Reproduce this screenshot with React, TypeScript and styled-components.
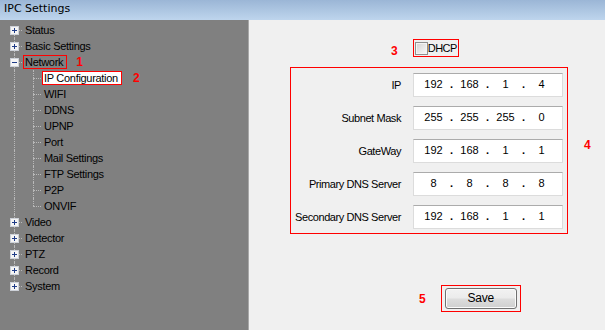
import React from "react";
import styled, { createGlobalStyle } from "styled-components";

const GlobalStyle = createGlobalStyle`
  html, body { margin: 0; padding: 0; background: #f0f0f0; }
  body {
    font-family: "Liberation Sans", Arial, sans-serif;
    font-size: 11px;
    color: #000;
    overflow: hidden;
  }
  * { box-sizing: border-box; }
`;

const Window = styled.div`
  width: 605px;
  height: 330px;
  display: flex;
  flex-direction: column;
  background: #f0f0f0;
  overflow: hidden;
`;

const TitleBar = styled.header`
  height: 20px;
  flex: none;
  padding-left: 4px;
  line-height: 18px;
  font-family: "DejaVu Sans", "Liberation Sans", sans-serif;
  font-size: 11px;
  color: #000;
  background: linear-gradient(#9bb6d6, #bed5ed);
`;

const Body = styled.div`
  flex: 1;
  display: flex;
  min-height: 0;
`;

const Sidebar = styled.nav`
  width: 249px;
  flex: none;
  background: #808080;
  border-right: 1px solid #a8a8a8;
  padding-top: 2px;
`;

const Tree = styled.ul`
  list-style: none;
  margin: 0;
  padding: 0;
`;

const Row = styled.li`
  display: flex;
  align-items: center;
  height: 16px;
  line-height: 16px;
  white-space: nowrap;
  letter-spacing: -0.3px;
`;

const Gutter = styled.span<{
  $width: number;
  $line: number;
  $first?: boolean;
  $last?: boolean;
  $branch?: boolean;
}>`
  position: relative;
  align-self: stretch;
  flex: none;
  width: ${(p) => p.$width}px;
  &::before {
    content: "";
    position: absolute;
    left: ${(p) => p.$line}px;
    top: ${(p) => (p.$first ? "50%" : "0")};
    bottom: ${(p) => (p.$last ? "50%" : "0")};
    border-left: 1px dotted #b9b9b9;
  }
  &::after {
    content: "";
    display: ${(p) => (p.$branch ? "block" : "none")};
    position: absolute;
    left: ${(p) => p.$line}px;
    right: 0;
    top: 50%;
    border-top: 1px dotted #b9b9b9;
  }
`;

const ExpanderIcon = styled.svg`
  position: absolute;
  left: 10px;
  top: 4px;
  z-index: 1;
`;

const Label = styled.span<{ $boxed?: boolean; $selected?: boolean }>`
  margin-left: 1px;
  padding: 0 3px 0 1px;
  line-height: 12px;
  border: 1px solid ${(p) => (p.$boxed ? "#ff0000" : "transparent")};
  background: ${(p) => (p.$selected ? "#ffffff" : "transparent")};
`;

const Marker = styled.span<{ $gap?: number }>`
  color: #ff0000;
  font-weight: bold;
  font-size: 12px;
  line-height: 14px;
  letter-spacing: 0;
  margin-left: ${(p) => p.$gap ?? 0}px;
  flex: none;
`;

const Content = styled.main`
  flex: 1;
  display: flex;
  flex-direction: column;
  padding-top: 19px;
`;

const DhcpRow = styled.div`
  display: flex;
  align-items: flex-end;
  padding-left: 142px;
`;

const LowMarker = styled(Marker)`
  margin-bottom: -1px;
`;

const Outline = styled.div<{ $gap?: number }>`
  border: 1px solid #ff0000;
  margin-left: ${(p) => p.$gap ?? 0}px;
`;

const DhcpBox = styled(Outline)`
  display: flex;
  align-items: center;
  height: 18px;
  padding: 0 1px;
`;

const CheckBox = styled.span`
  flex: none;
  width: 13px;
  height: 13px;
  border: 1px solid #8e8f8f;
  background: linear-gradient(135deg, #d2d2d2, #fafafa);
  box-shadow: inset 0 0 0 1px #f4f4f4;
`;

const CheckText = styled.span`
  letter-spacing: -0.5px;
  line-height: 14px;
`;

const FieldsRow = styled.div`
  display: flex;
  align-items: flex-start;
  margin-top: 10px;
  padding-left: 41px;
`;

const FieldsBox = styled.div`
  width: 278px;
  border: 1px solid #ff0000;
  padding: 5px 4px 4px 0;
  display: flex;
  flex-direction: column;
  gap: 9px;
`;

const FieldRow = styled.div`
  display: flex;
  align-items: center;
  height: 24px;
`;

const FieldLabel = styled.span`
  width: 110px;
  margin-right: 12px;
  text-align: right;
  white-space: nowrap;
  letter-spacing: -0.42px;
`;

const IpInput = styled.div`
  width: 150px;
  height: 24px;
  display: flex;
  align-items: center;
  padding: 0 0 2px 5px;
  background: #ffffff;
  border: 1px solid #dcdcdc;
  border-top-color: #ababab;
`;

const Octet = styled.span`
  width: 29px;
  text-align: center;
`;

const Dot = styled.span`
  width: 7px;
  text-align: center;
  font-weight: bold;
`;

const SideMarker = styled(Marker)`
  margin-top: 71px;
`;

const SaveRow = styled.div`
  display: flex;
  align-items: center;
  margin-top: 51px;
  padding-left: 170px;
`;

const SaveBox = styled(Outline)`
  padding: 2px 3px;
`;

const Button = styled.button`
  display: block;
  width: 72px;
  height: 21px;
  padding: 0 0 1px;
  border: 1px solid #707070;
  border-radius: 3px;
  background: linear-gradient(#f2f2f2 0%, #ebebeb 48%, #dddddd 52%, #cfcfcf 100%);
  box-shadow: inset 0 0 0 1px #fbfbfb;
  font-family: "Liberation Sans", Arial, sans-serif;
  font-size: 12px;
  letter-spacing: -0.3px;
  color: #000;
`;

const Expander = ({ open }: { open?: boolean }) => (
  <ExpanderIcon width="9" height="9" viewBox="0 0 9 9">
    <rect x="0.5" y="0.5" width="8" height="8" fill="#f5f5f5" stroke="#cdd1d8" />
    <path d="M2 4.5h5" stroke="#1f3c88" />
    {!open && <path d="M4.5 2v5" stroke="#1f3c88" />}
  </ExpanderIcon>
);

type Item = {
  label: string;
  marker?: string;
  gap?: number;
  boxed?: boolean;
  selected?: boolean;
  children?: Item[];
};

const tree: Item[] = [
  { label: "Status" },
  { label: "Basic Settings" },
  {
    label: "Network",
    boxed: true,
    marker: "1",
    gap: 9,
    children: [
      { label: "IP Configuration", boxed: true, selected: true, marker: "2", gap: 11 },
      { label: "WIFI" },
      { label: "DDNS" },
      { label: "UPNP" },
      { label: "Port" },
      { label: "Mail Settings" },
      { label: "FTP Settings" },
      { label: "P2P" },
      { label: "ONVIF" },
    ],
  },
  { label: "Video" },
  { label: "Detector" },
  { label: "PTZ" },
  { label: "Record" },
  { label: "System" },
];

const fields: { label: string; value: string[] }[] = [
  { label: "IP", value: ["192", "168", "1", "4"] },
  { label: "Subnet Mask", value: ["255", "255", "255", "0"] },
  { label: "GateWay", value: ["192", "168", "1", "1"] },
  { label: "Primary DNS Server", value: ["8", "8", "8", "8"] },
  { label: "Secondary DNS Server", value: ["192", "168", "1", "1"] },
];

const ItemLabel = ({ item }: { item: Item }) => (
  <>
    <Label $boxed={item.boxed} $selected={item.selected}>
      {item.label}
    </Label>
    {item.marker && <Marker $gap={item.gap}>{item.marker}</Marker>}
  </>
);

export default function App() {
  return (
    <Window>
      <GlobalStyle />
      <TitleBar>IPC Settings</TitleBar>
      <Body>
        <Sidebar>
          <Tree>
            {tree.map((item, i) => (
              <React.Fragment key={item.label}>
                <Row>
                  <Gutter
                    $width={22}
                    $line={14}
                    $branch
                    $first={i === 0}
                    $last={i === tree.length - 1}
                  >
                    <Expander open={!!item.children} />
                  </Gutter>
                  <ItemLabel item={item} />
                </Row>
                {item.children?.map((child, j) => (
                  <Row key={child.label}>
                    <Gutter $width={22} $line={14} />
                    <Gutter
                      $width={19}
                      $line={11}
                      $branch
                      $last={j === item.children!.length - 1}
                    />
                    <ItemLabel item={child} />
                  </Row>
                ))}
              </React.Fragment>
            ))}
          </Tree>
        </Sidebar>
        <Content>
          <DhcpRow>
            <LowMarker>3</LowMarker>
            <DhcpBox $gap={15}>
              <CheckBox />
              <CheckText>DHCP</CheckText>
            </DhcpBox>
          </DhcpRow>
          <FieldsRow>
            <FieldsBox>
              {fields.map((f) => (
                <FieldRow key={f.label}>
                  <FieldLabel>{f.label}</FieldLabel>
                  <IpInput>
                    {f.value.map((v, k) => (
                      <React.Fragment key={k}>
                        {k > 0 && <Dot>.</Dot>}
                        <Octet>{v}</Octet>
                      </React.Fragment>
                    ))}
                  </IpInput>
                </FieldRow>
              ))}
            </FieldsBox>
            <SideMarker $gap={16}>4</SideMarker>
          </FieldsRow>
          <SaveRow>
            <Marker>5</Marker>
            <SaveBox $gap={15}>
              <Button type="button">Save</Button>
            </SaveBox>
          </SaveRow>
        </Content>
      </Body>
    </Window>
  );
}
